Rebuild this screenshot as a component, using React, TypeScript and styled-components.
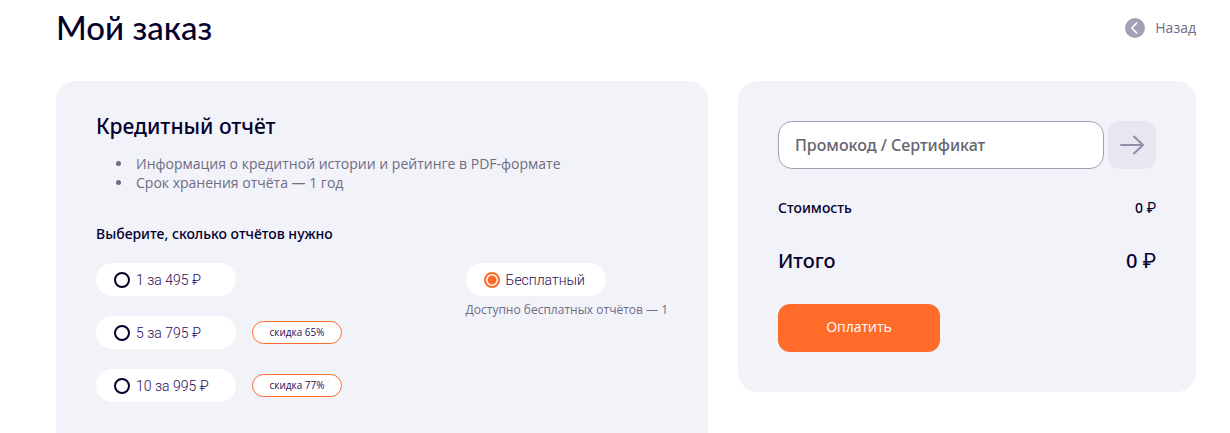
import React, { useState } from "react";
import styled, { createGlobalStyle } from "styled-components";

const ink = "#03002c";
const muted = "#6f6c85";
const accent = "#ff6b29";
const panel = "#f2f3f9";
const line = "#a3a0b6";
const medium = `"Noto Sans", "Open Sans", sans-serif`;

const GlobalStyle = createGlobalStyle`
  * { box-sizing: border-box; }
  body {
    margin: 0;
    background: #fff;
    color: ${ink};
    font-family: "Open Sans", "Noto Sans", sans-serif;
    font-size: 14px;
    line-height: 20px;
  }
  button, input { font-family: inherit; }
`;

const Page = styled.div`
  padding: 0 34px 0 56px;
`;

const Header = styled.header`
  display: flex;
  align-items: center;
  justify-content: space-between;
  height: 56px;
  margin-bottom: 25px;
`;

const Title = styled.h1`
  margin: 0;
  padding-bottom: 2px;
  font-family: Lato, "Open Sans", sans-serif;
  font-size: 33px;
  font-weight: 500;
  line-height: 40px;
`;

const BackLink = styled.a`
  display: flex;
  align-items: center;
  gap: 10px;
  color: ${muted};
  text-decoration: none;
`;

const Columns = styled.main`
  display: grid;
  grid-template-columns: minmax(0, 652fr) minmax(0, 458fr);
  align-items: start;
  gap: 30px;
`;

const Card = styled.section`
  border-radius: 20px;
  background: ${panel};
  padding: 40px;
`;

const ReportCard = styled(Card)`
  padding-top: 31px;
  padding-bottom: 60px;
`;

const CardTitle = styled.h2`
  margin: 0 0 14px;
  font-family: ${medium};
  font-size: 21px;
  font-weight: 500;
  line-height: 28px;
`;

const Features = styled.ul`
  margin: 0 0 32px;
  padding-left: 37px;
  color: ${muted};
  line-height: 19px;

  li { padding-left: 3px; }
`;

const Plans = styled.fieldset`
  margin: 0;
  padding: 0;
  border: 0;
  min-width: 0;
`;

const PlansTitle = styled.legend`
  padding: 0;
  margin-bottom: 19px;
  font-family: ${medium};
  font-weight: 500;
`;

const PlanColumns = styled.div`
  display: flex;
  justify-content: space-between;
  align-items: flex-start;
`;

const PlanList = styled.div`
  display: flex;
  flex-direction: column;
  gap: 20px;
`;

const PlanRow = styled.div`
  display: flex;
  align-items: center;
  gap: 16px;
`;

const Pill = styled.label`
  display: flex;
  align-items: center;
  gap: 6px;
  width: 140px;
  height: 33px;
  padding: 0 18px;
  border-radius: 17px;
  background: #fff;
  color: #2b0a57;
  font-family: Roboto, "Open Sans", sans-serif;
  font-weight: 300;
  white-space: nowrap;
  cursor: pointer;
`;

const Radio = styled.input`
  appearance: none;
  flex: none;
  width: 16px;
  height: 16px;
  margin: 0;
  border: 2px solid ${ink};
  border-radius: 50%;
  background: #fff;

  &:checked {
    border-color: ${accent};
    background: radial-gradient(circle, ${accent} 4px, #fff 5px);
  }
`;

const Badge = styled.span`
  width: 90px;
  border: 1px solid ${accent};
  border-radius: 12px;
  background: #fff;
  color: #2b0a57;
  font-size: 10px;
  line-height: 21px;
  text-align: center;
`;

const Note = styled.p`
  margin: 4px 0 0;
  color: ${muted};
  font-size: 12px;
  white-space: nowrap;
`;

const PromoForm = styled.form`
  display: flex;
  gap: 4px;
  margin-bottom: 29px;
`;

const PromoInput = styled.input`
  flex: 1;
  min-width: 0;
  height: 48px;
  padding: 0 16px;
  border: 1px solid ${line};
  border-radius: 14px;
  background: #fff;
  color: ${ink};
  font-family: ${medium};
  font-size: 16px;
  font-weight: 500;

  &::placeholder { color: #66646f; opacity: 1; }
`;

const ApplyButton = styled.button`
  display: flex;
  align-items: center;
  justify-content: center;
  width: 48px;
  height: 48px;
  padding: 0;
  border: 0;
  border-radius: 12px;
  background: #e7e7f2;
  cursor: pointer;
`;

const SumRow = styled.div<{ $total?: boolean }>`
  display: flex;
  justify-content: space-between;
  margin-bottom: 29px;
  font-family: ${medium};
  font-size: ${(p) => (p.$total ? 20 : 14)}px;
  font-weight: 500;
  line-height: ${(p) => (p.$total ? 28 : 20)}px;
`;

const Currency = styled.span`
  font-family: Roboto, sans-serif;
  font-weight: 400;
`;

const PayButton = styled.button`
  height: 48px;
  width: 162px;
  padding: 0 0 4px;
  border: 0;
  border-radius: 12px;
  background: ${accent};
  color: #fff;
  font-size: 14px;
  font-weight: 400;
  cursor: pointer;
`;

const plans = [
  { id: "one", label: "1 за 495 ₽" },
  { id: "five", label: "5 за 795 ₽", discount: "скидка 65%" },
  { id: "ten", label: "10 за 995 ₽", discount: "скидка 77%" },
];

export default function App() {
  const [plan, setPlan] = useState("free");
  const radio = (id: string) => (
    <Radio type="radio" name="plan" value={id} checked={plan === id} onChange={() => setPlan(id)} />
  );

  return (
    <>
      <GlobalStyle />
      <Page>
        <Header>
          <Title>Мой заказ</Title>
          <BackLink href="#">
            <svg width="20" height="20" viewBox="0 0 20 20" fill="none" aria-hidden="true">
              <circle cx="10" cy="10" r="10" fill={line} />
              <path d="M11.7 5 6.8 10l4.9 5" stroke="#fff" strokeWidth="1.6" strokeLinecap="round" strokeLinejoin="round" />
            </svg>
            Назад
          </BackLink>
        </Header>
        <Columns>
          <ReportCard>
            <CardTitle>Кредитный отчёт</CardTitle>
            <Features>
              <li>Информация о кредитной истории и рейтинге в PDF-формате</li>
              <li>Срок хранения отчёта — 1 год</li>
            </Features>
            <Plans>
              <PlansTitle>Выберите, сколько отчётов нужно</PlansTitle>
              <PlanColumns>
                <PlanList>
                  {plans.map((p) => (
                    <PlanRow key={p.id}>
                      <Pill>
                        {radio(p.id)}
                        {p.label}
                      </Pill>
                      {p.discount && <Badge>{p.discount}</Badge>}
                    </PlanRow>
                  ))}
                </PlanList>
                <div>
                  <Pill>
                    {radio("free")}
                    Бесплатный
                  </Pill>
                  <Note>Доступно бесплатных отчётов — 1</Note>
                </div>
              </PlanColumns>
            </Plans>
          </ReportCard>
          <Card>
            <PromoForm onSubmit={(e) => e.preventDefault()}>
              <PromoInput type="text" aria-label="Промокод / Сертификат" placeholder="Промокод / Сертификат" />
              <ApplyButton type="submit" aria-label="Применить">
                <svg width="24" height="24" viewBox="0 0 24 24" fill="none" stroke="#918ea8" strokeWidth="2" strokeLinecap="round" strokeLinejoin="round" aria-hidden="true">
                  <path d="M1 12h22M14 3.5l9 8.5-9 8.5" />
                </svg>
              </ApplyButton>
            </PromoForm>
            <SumRow>
              <span>Стоимость</span>
              <span>0 <Currency>₽</Currency></span>
            </SumRow>
            <SumRow $total>
              <span>Итого</span>
              <span>0 <Currency>₽</Currency></span>
            </SumRow>
            <PayButton type="button">Оплатить</PayButton>
          </Card>
        </Columns>
      </Page>
    </>
  );
}
